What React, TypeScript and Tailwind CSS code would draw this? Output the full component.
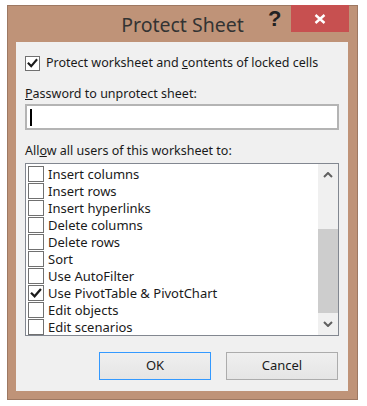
import React from "react";

const font = { fontFamily: '"Noto Sans", "Open Sans", sans-serif' };

function Check() {
  return (
    <svg width="15" height="15" viewBox="0 0 15 15" className="block">
      <path d="M3 7.5 L6 10.5 L12 3.5" fill="none" stroke="#1a1a1a" strokeWidth="2.4" strokeLinecap="square" />
    </svg>
  );
}

function Box({ checked, className }: { checked?: boolean; className: string }) {
  return (
    <div className={`${className} border border-[#707070] bg-white flex items-center justify-center shrink-0`}>
      {checked ? <Check /> : null}
    </div>
  );
}

const items: [string, boolean][] = [
  ["Insert columns", false],
  ["Insert rows", false],
  ["Insert hyperlinks", false],
  ["Delete columns", false],
  ["Delete rows", false],
  ["Sort", false],
  ["Use AutoFilter", false],
  ["Use PivotTable & PivotChart", true],
  ["Edit objects", false],
  ["Edit scenarios", false],
];

export default function App() {
  return (
    <div className="w-[367px] h-[406px] bg-white overflow-hidden pt-[5px] pl-[7px]" style={font}>
      <div className="w-[351px] h-[395px] border border-[#9d7862] bg-[#bf9378] flex flex-col">
        {/* title bar */}
        <div className="relative h-[36px] flex items-center justify-center">
          <span className="text-[19.5px] leading-none text-[#333333] mt-[1px]" style={{ fontFamily: '"Noto Sans", "Open Sans", sans-serif' }}>
            Protect Sheet
          </span>
          <span className="absolute left-[260px] top-[2px] text-[22px] font-bold leading-none text-[#222]" style={{ fontFamily: '"Liberation Sans", sans-serif' }}>
            ?
          </span>
          <div className="absolute left-[283px] -top-[1px] w-[58px] h-[27px] bg-[#c75050] flex items-center justify-center">
            <svg width="12" height="10" viewBox="0 0 12 10">
              <path d="M1.5 1 L10.5 9 M10.5 1 L1.5 9" stroke="#fff" strokeWidth="2.4" />
            </svg>
          </div>
        </div>
        {/* content */}
        <div className="ml-[8px] w-[332px] h-[349px] bg-[#f0f0f0] flex flex-col text-[12.5px] text-[#1a1a1a]">
          <div className="flex items-center mt-[14px] ml-[9px] h-[15px]">
            <Box checked className="w-[15px] h-[15px]" />
            <span className="ml-[6px]">
              Protect worksheet and <u>c</u>ontents of locked cells
            </span>
          </div>
          <div className="mt-[14px] ml-[9px] h-[17px] leading-[17px]">
            <u>P</u>assword to unprotect sheet:
          </div>
          <div className="mt-[2px] ml-[9px] w-[314px] h-[26px] border-2 border-[#b4b4b4] bg-white flex items-center pl-[3px]">
            <div className="w-[2px] h-[17px] bg-black" />
          </div>
          <div className="mt-[12px] ml-[9px] h-[17px] leading-[17px]">
            All<u>o</u>w all users of this worksheet to:
          </div>
          <div className="mt-[4px] ml-[9px] w-[314px] h-[173px] border border-[#828790] bg-white flex">
            <div className="flex-1 flex flex-col pt-[2px] pl-[2px]">
              {items.map(([label, c]) => (
                <div key={label} className="h-[17px] flex items-start">
                  <Box checked={c} className="w-[16px] h-[16px]" />
                  <span className="ml-[4px] text-[13px] leading-[17px]">{label}</span>
                </div>
              ))}
            </div>
            <div className="w-[20px] bg-[#f0f0f0] relative">
              <svg className="absolute left-[5px] top-[8px]" width="10" height="6" viewBox="0 0 10 6">
                <path d="M1 5 L5 1 L9 5" fill="none" stroke="#606060" strokeWidth="2" />
              </svg>
              <div className="absolute left-0 right-0 top-[65px] h-[84px] bg-[#cdcdcd]" />
              <svg className="absolute left-[5px] top-[157px]" width="10" height="6" viewBox="0 0 10 6">
                <path d="M1 1 L5 5 L9 1" fill="none" stroke="#606060" strokeWidth="2" />
              </svg>
            </div>
          </div>
          <div className="mt-[16px] flex ml-[83px] gap-[15px]">
            <div className="w-[112px] h-[28px] border border-[#3399ff] bg-gradient-to-b from-[#efefef] to-[#e5e5e5] flex items-center justify-center text-[13px]">
              OK
            </div>
            <div className="w-[112px] h-[28px] border border-[#acacac] bg-gradient-to-b from-[#efefef] to-[#e5e5e5] flex items-center justify-center text-[13px]">
              Cancel
            </div>
          </div>
        </div>
      </div>
    </div>
  );
}
